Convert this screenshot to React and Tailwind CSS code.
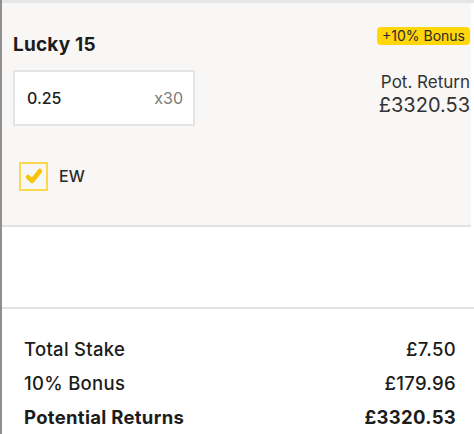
import React from 'react';

const font = { fontFamily: 'Inter, "Noto Sans", sans-serif' };

function Check() {
  return (
    <div className="w-[29px] h-[29px] border-2 border-[#fcd94a] flex items-center justify-center">
      <svg width="20" height="20" viewBox="0 0 20 20">
        <path d="M4 11 L8 15 L16 5" fill="none" stroke="#f7c600" strokeWidth="4.5" strokeLinecap="round" strokeLinejoin="round" />
      </svg>
    </div>
  );
}

export default function App() {
  const totals = [
    { label: 'Total Stake', value: '£7.50', bold: false },
    { label: '10% Bonus', value: '£179.96', bold: false },
    { label: 'Potential Returns', value: '£3320.53', bold: true }
  ];
  return (
    <div className="w-[474px] h-[434px] flex bg-white overflow-hidden text-[#1c1c1c]" style={font}>
      {/* left edge */}
      <div className="w-[2px] bg-[#8f8f8f]" />

      <div className="flex-1 flex flex-col">
        <div className="h-[3px] bg-[#e6e6e6]" />

        {/* bet card */}
        <div className="h-[225px] bg-[#f8f7f5] border-b-2 border-[#e2e2e2] mr-[3px] pl-[11px] pr-[1px] pt-[24px]">
          <div className="flex justify-between items-start">
            <h2 className="mt-[7px] text-[19px] leading-[22px] font-bold tracking-[0.2px]">Lucky 15</h2>
            <span className="h-[18px] px-[5px] rounded-[4px] bg-[#ffd60a] text-[14px] leading-[18px] text-[#2a2a2a]">
              +10% Bonus
            </span>
          </div>

          <div className="mt-[14px] flex justify-between items-start">
            <div className="w-[182px] h-[56px] bg-white border-2 border-[#e4e4e4] flex items-center justify-between pl-[12px] pr-[10px]">
              <span className="text-[16px] font-[450]">0.25</span>
              <span className="text-[16px] text-[#7a7a7a]">x30</span>
            </div>
            <div className="text-right mt-[1px]">
              <div className="text-[17px] leading-[22px] text-[#333]">Pot. Return</div>
              <div className="text-[20px] leading-[24px] text-[#333]">£3320.53</div>
            </div>
          </div>

          <div className="mt-[36px] ml-[6px] flex items-center gap-[11px]">
            <Check />
            <span className="text-[16px] text-[#2a2a2a] font-[450]">EW</span>
          </div>
        </div>

        {/* empty area */}
        <div className="h-[82px] border-b-2 border-[#e2e2e2]" />

        {/* totals */}
        <div className="pl-[22px] pr-[18px] pt-[23px]">
          {totals.map((row) => (
            <div key={row.label} className={`flex justify-between text-[18.5px] leading-[34px] tracking-[0.3px] ${row.bold ? 'font-bold' : 'font-[450]'}`}>
              <span>{row.label}</span>
              <span>{row.value}</span>
            </div>
          ))}
        </div>
      </div>
    </div>
  );
}
